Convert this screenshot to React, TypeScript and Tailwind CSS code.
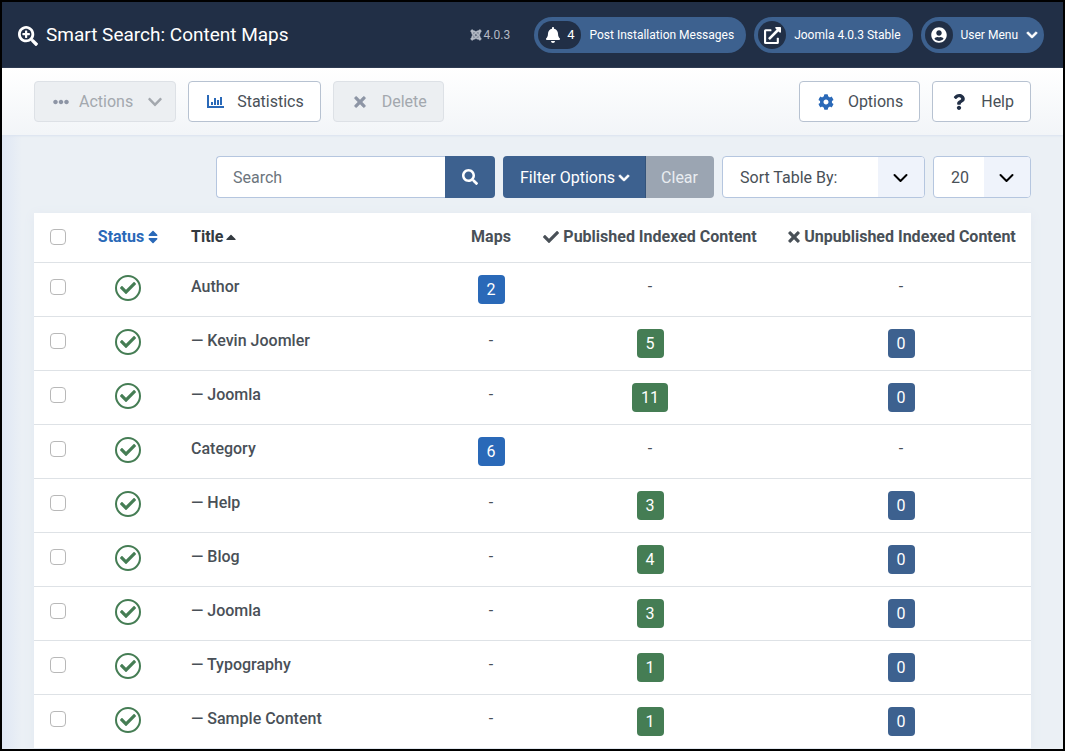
import type { ReactNode } from "react";
import {
  FaBell,
  FaCaretUp,
  FaCheck,
  FaChevronDown,
  FaCog,
  FaEllipsisH,
  FaExternalLinkAlt,
  FaJoomla,
  FaQuestion,
  FaSearch,
  FaSearchPlus,
  FaSort,
  FaTimes,
  FaUserCircle,
} from "react-icons/fa";

type Row = {
  title: string;
  maps?: number;
  published?: number;
  unpublished?: number;
};

const rows: Row[] = [
  { title: "Author", maps: 2 },
  { title: "— Kevin Joomler", published: 5, unpublished: 0 },
  { title: "— Joomla", published: 11, unpublished: 0 },
  { title: "Category", maps: 6 },
  { title: "— Help", published: 3, unpublished: 0 },
  { title: "— Blog", published: 4, unpublished: 0 },
  { title: "— Joomla", published: 3, unpublished: 0 },
  { title: "— Typography", published: 1, unpublished: 0 },
  { title: "— Sample Content", published: 1, unpublished: 0 },
];

function ChartIcon() {
  return (
    <svg viewBox="0 0 18 14" className="h-[14px] w-[18px]" fill="currentColor" aria-hidden="true">
      <path d="M0 0h2v11h15v2H0zM4 7h2v3H4zM7 3h2v7H7zM10 5h2v5h-2zM13 2h2v8h-2z" />
    </svg>
  );
}

function ToolbarButton({ children, disabled = false }: { children: ReactNode; disabled?: boolean }) {
  return (
    <button
      type="button"
      disabled={disabled}
      className="flex h-[41px] items-center rounded-[4px] border border-[#b7c2d1] bg-white pr-4 pl-[18px] text-[#495057] disabled:border-[#dde1e6] disabled:bg-[#eceff2] disabled:text-[#a3a8ae]"
    >
      {children}
    </button>
  );
}

function HeaderPill({ icon, children }: { icon: ReactNode; children: ReactNode }) {
  return (
    <button type="button" className="flex h-9 items-center rounded-full bg-[#3d618f] p-1 text-xs text-white">
      <span className="flex h-7 min-w-7 items-center justify-center rounded-full bg-[#212f46]">{icon}</span>
      {children}
    </button>
  );
}

function Count({ value, color }: { value?: number; color: string }) {
  if (value === undefined) return <span className="block pb-1">-</span>;
  return (
    <span className={`inline-block h-[29px] min-w-[27px] rounded-[4px] px-[9px] align-middle leading-[29px] text-white ${color}`}>
      {value}
    </span>
  );
}

const checkbox = "block size-4 appearance-none rounded-[4px] border border-[#b8b8b8] bg-white checked:bg-[#2a69b8]";

function SelectBox({ label, options, className }: { label: string; options: string[]; className: string }) {
  return (
    <div className={`grid h-[42px] overflow-hidden rounded-[4px] border border-[#b5c6df] bg-white ${className}`}>
      <select aria-label={label} className="col-start-1 row-start-1 w-full appearance-none bg-transparent pt-[2px] pl-[17px] text-[#495057]">
        {options.map((option) => (
          <option key={option}>{option}</option>
        ))}
      </select>
      <span className="pointer-events-none col-start-1 row-start-1 flex w-[46px] items-center justify-center justify-self-end bg-[#eff3fb]">
        <svg viewBox="0 0 16 16" className="size-4 text-black" fill="none" stroke="currentColor" strokeWidth="2" strokeLinecap="round" strokeLinejoin="round" aria-hidden="true">
          <path d="m1.5 6 6 6 6-6" />
        </svg>
      </span>
    </div>
  );
}

export default function App() {
  return (
    <div className="flex h-screen flex-col overflow-hidden border-2 border-black bg-[#ebf0f5] font-[Roboto,sans-serif] text-base text-[#495057]">
      <header className="flex h-[66px] shrink-0 items-center justify-between bg-[#212f46] pr-[19px] pl-4 text-white">
        <h1 className="flex items-center gap-2 pt-px text-[19px] font-normal">
          <FaSearchPlus className="size-5" />
          Smart Search: Content Maps
        </h1>
        <div className="flex items-center gap-2">
          <span className="mr-4 flex items-center gap-[2px] text-xs text-[#b4bac5]">
            <FaJoomla className="size-3 stroke-current stroke-[24]" />
            4.0.3
          </span>
          <HeaderPill
            icon={
              <span className="flex items-center gap-[6px] px-[7px] text-[13px]">
                <FaBell className="size-4" />4
              </span>
            }
          >
            <span className="px-2">Post Installation Messages</span>
          </HeaderPill>
          <HeaderPill icon={<FaExternalLinkAlt className="size-[17px]" />}>
            <span className="px-2">Joomla 4.0.3 Stable</span>
          </HeaderPill>
          <HeaderPill icon={<FaUserCircle className="size-4" />}>
            <span className="px-2">User Menu</span>
            <FaChevronDown className="mr-[2px] size-3 stroke-current stroke-[36]" />
          </HeaderPill>
        </div>
      </header>

      <div className="flex min-h-0 flex-1 flex-col bg-[linear-gradient(to_right,#dfe7f4,#ebf0f5_20px)]">
        <div className="flex h-[67px] shrink-0 items-center justify-between bg-linear-to-b from-white to-[#f2f5f8] px-8 shadow-[0_1px_2px_#d9e2ef]">
          <div className="flex gap-3">
            <ToolbarButton disabled>
              <FaEllipsisH className="mr-[10px] size-4 text-[#8d95a5]" />
              Actions
              <FaChevronDown className="-mr-1 ml-[14px] size-4" />
            </ToolbarButton>
            <ToolbarButton>
              <span className="mr-3 text-[#2a69b8]">
                <ChartIcon />
              </span>
              Statistics
            </ToolbarButton>
            <ToolbarButton disabled>
              <FaTimes className="mr-[14px] size-4 stroke-current stroke-[16] text-[#8d95a5]" />
              Delete
            </ToolbarButton>
          </div>
          <div className="flex gap-3">
            <ToolbarButton>
              <FaCog className="mr-[14px] size-4 text-[#2a69b8]" />
              Options
            </ToolbarButton>
            <ToolbarButton>
              <FaQuestion className="mr-[14px] size-4 text-[#212f46]" />
              Help
            </ToolbarButton>
          </div>
        </div>

        <main className="px-8 pt-[21px]">
          <form className="mb-[15px] flex justify-end gap-2" onSubmit={(event) => event.preventDefault()}>
            <div className="flex">
              <input
                type="text"
                aria-label="Search"
                placeholder="Search"
                className="h-[42px] w-[229px] rounded-l-[4px] border border-r-0 border-[#b5c6df] bg-white px-4 placeholder:text-[#6c757d]"
              />
              <button type="submit" aria-label="Search" className="flex w-[50px] items-center justify-center rounded-r-[4px] bg-[#3d618f] text-white">
                <FaSearch className="size-4" />
              </button>
            </div>
            <div className="flex text-white">
              <button type="button" className="flex h-[42px] items-center gap-[3px] rounded-l-[4px] border-r border-[#34537a] bg-[#3d618f] pt-px pr-[15px] pl-[17px]">
                Filter Options
                <FaChevronDown className="size-3 stroke-current stroke-[36]" />
              </button>
              <button type="button" disabled className="rounded-r-[4px] bg-[#9ba5b2] pt-px pr-4 pl-[15px] text-[#e9edf1]">
                Clear
              </button>
            </div>
            <SelectBox label="Sort Table By" options={["Sort Table By:", "Title ascending", "Title descending"]} className="w-[203px]" />
            <SelectBox label="Items per page" options={["20", "50", "100"]} className="w-[98px]" />
          </form>

          <table className="w-full table-fixed border-collapse bg-white text-center shadow-[0_2px_10px_#e1e7f0]">
            <colgroup>
              <col className="w-[47px]" />
              <col className="w-[94px]" />
              <col />
              <col className="w-[76px]" />
              <col className="w-[242px]" />
              <col className="w-[260px]" />
            </colgroup>
            <thead>
              <tr className="h-[49px] border-b border-[#dee2e6] whitespace-nowrap [&>th]:p-0 [&>th]:font-bold">
                <th>
                  <input type="checkbox" aria-label="Check all items" className={`${checkbox} ml-4`} />
                </th>
                <th>
                  <a href="#status" className="flex items-center justify-center gap-1 text-[#2a69b8]">
                    Status
                    <FaSort className="h-4 w-[10px]" />
                  </a>
                </th>
                <th className="text-left">
                  <a href="#title" className="ml-4 flex items-center text-[#343a40]">
                    Title
                    <FaCaretUp className="size-4" />
                  </a>
                </th>
                <th>Maps</th>
                <th>
                  <span className="flex items-center justify-center gap-1">
                    <FaCheck className="size-4" />
                    Published Indexed Content
                  </span>
                </th>
                <th>
                  <span className="flex items-center justify-center gap-[2px]">
                    <FaTimes className="size-4 stroke-current stroke-[16]" />
                    Unpublished Indexed Content
                  </span>
                </th>
              </tr>
            </thead>
            <tbody>
              {rows.map((row, index) => (
                <tr key={index} className="h-[54px] border-b border-[#dee2e6] last:border-b-0 [&>td]:p-0">
                  <td>
                    <input type="checkbox" aria-label={`Select ${row.title}`} className={`${checkbox} mb-1 ml-4`} />
                  </td>
                  <td>
                    <span className="mx-auto mb-[2px] flex size-[26px] items-center justify-center rounded-full border-2 border-[#457d54] text-[#457d54]">
                      <FaCheck className="size-4" />
                    </span>
                  </td>
                  <th scope="row" className="p-0 pb-1 pl-4 text-left font-medium">
                    {row.title}
                  </th>
                  <td>
                    <Count value={row.maps} color="bg-[#2a69b8]" />
                  </td>
                  <td>
                    <Count value={row.published} color="bg-[#457d54]" />
                  </td>
                  <td>
                    <Count value={row.unpublished} color="bg-[#3d618f]" />
                  </td>
                </tr>
              ))}
            </tbody>
          </table>
        </main>
      </div>
    </div>
  );
}
